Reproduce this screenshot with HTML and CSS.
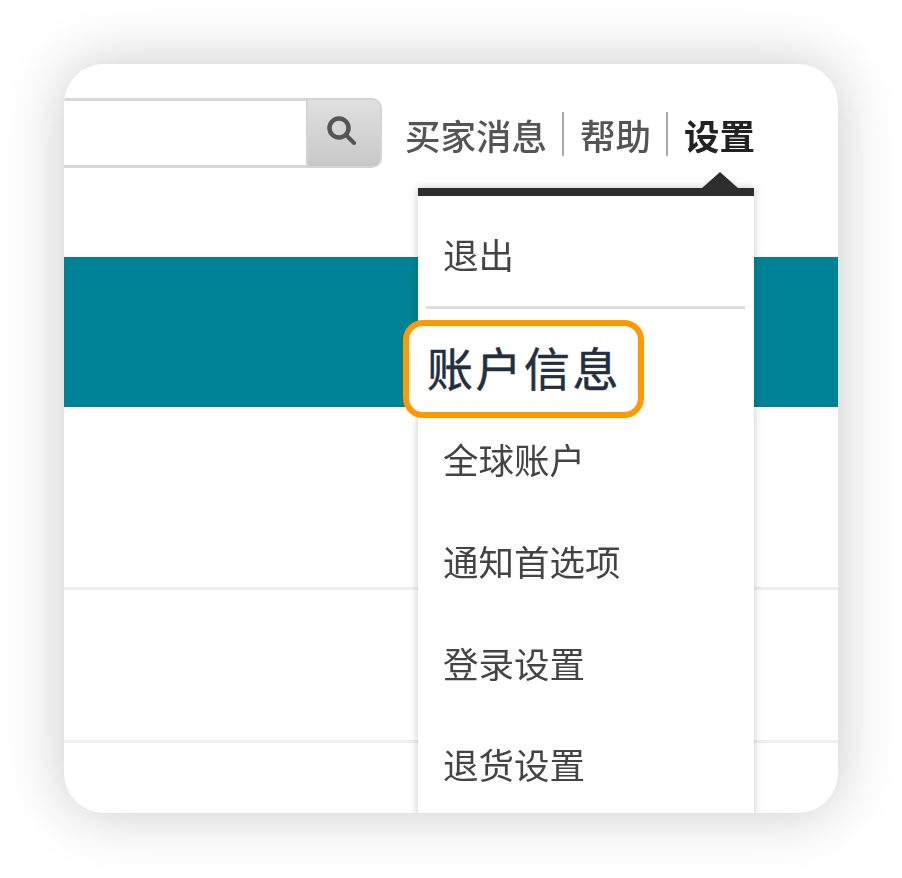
FILE: index.html
```html
<!DOCTYPE html>
<html lang="zh-CN">
<head>
<meta charset="UTF-8">
<meta name="viewport" content="width=device-width, initial-scale=1.0">
<title>设置</title>
<link rel="stylesheet" href="styles.css">
</head>
<body>
<div class="card">
  <div class="header">
    <div class="search">
      <div class="search-input"></div>
      <div class="search-btn">
        <svg width="30" height="30" viewBox="0 0 30 30"><circle cx="12" cy="12" r="9.5" fill="none" stroke="#555" stroke-width="4.5"/><path d="M19 19l8 8" stroke="#555" stroke-width="4" stroke-linecap="round"/></svg>
      </div>
    </div>
    <div class="nav">
      <a>买家消息</a>
      <span class="sep"></span>
      <a>帮助</a>
      <span class="sep"></span>
      <a class="active">设置</a>
    </div>
  </div>
  <div class="band"></div>
  <div class="row row-first"></div>
  <div class="row row-second"></div>

  <div class="menu">
    <div class="menu-arrow"></div>
    <a class="menu-item item-top">退出</a>
    <div class="menu-divider"></div>
    <div class="menu-spacer"></div>
    <a class="menu-item">全球账户</a>
    <a class="menu-item">通知首选项</a>
    <a class="menu-item">登录设置</a>
    <a class="menu-item">退货设置</a>
  </div>
  <div class="callout">账户信息</div>
</div>
</body>
</html>
```

FILE: styles.css
```css
* {
  box-sizing: border-box;
}
body {
  margin: 0;
  padding: 64px;
  background-color: #fff;
  font-family: "Liberation Sans", "Noto Sans CJK SC", sans-serif;
}
.card {
  position: relative;
  height: 749px;
  border-radius: 40px;
  background-color: #fff;
  box-shadow: 0 0 60px rgba(0, 0, 0, 0.22);
  overflow: hidden;
}
.header {
  display: flex;
  justify-content: space-between;
  align-items: flex-start;
  height: 193px;
  padding: 34px 83px 0 0;
}
.search {
  display: flex;
  height: 70px;
}
.search-input {
  width: 242px;
  border: 3px solid #d8d8d8;
  border-left: none;
  border-right: none;
  background-color: #fff;
}
.search-btn {
  display: flex;
  align-items: center;
  justify-content: center;
  width: 76px;
  padding: 0 5px 4px 0;
  border-radius: 0 10px 10px 0;
  border: 2px solid #d4d4d4;
  background: linear-gradient(#e0e0e0, #c8c8c8);
}
.search-btn svg {
  filter: blur(0.6px);
}
.nav {
  display: flex;
  align-items: center;
  height: 72px;
  font-size: 35.5px;
  color: #555;
  font-weight: 500;
}
.nav a {
  filter: blur(0.5px);
}
.nav .active {
  color: #222;
  font-weight: 700;
}
.sep {
  width: 2px;
  height: 44px;
  margin: 0 15.5px;
  background-color: #aaa;
}
.band {
  height: 150px;
  background-color: #008296;
}
.row {
  border-bottom: 3px solid #eee;
}
.row-first {
  height: 183px;
}
.row-second {
  height: 153px;
}
.menu {
  position: absolute;
  top: 124px;
  left: 354px;
  width: 336px;
  height: 640px;
  border-top: 8px solid #2e2e2e;
  background-color: #fff;
  box-shadow: 0 0 8px rgba(0, 0, 0, 0.22);
}
.menu-arrow {
  position: absolute;
  top: -24px;
  left: 284px;
  width: 0;
  height: 0;
  border-left: 18px solid transparent;
  border-right: 18px solid transparent;
  border-bottom: 16px solid #2e2e2e;
}
.menu-item {
  display: flex;
  align-items: center;
  height: 101.7px;
  padding-left: 25px;
  font-size: 35.5px;
  color: #444;
  filter: blur(0.5px);
}
.item-top {
  height: 110px;
  padding-top: 4px;
}
.menu-divider {
  height: 3px;
  margin: 0 9px 0 8px;
  background-color: #ddd;
}
.menu-spacer {
  height: 99px;
}
.callout {
  position: absolute;
  top: 256px;
  left: 339px;
  width: 241px;
  height: 98px;
  padding-left: 18px;
  border: 6px solid #f90;
  border-radius: 20px;
  background-color: #fff;
  font-size: 46px;
  -webkit-text-stroke: 0.5px #232f3e;
  line-height: 88px;
  letter-spacing: 2.5px;
  color: #232f3e;
}
```
